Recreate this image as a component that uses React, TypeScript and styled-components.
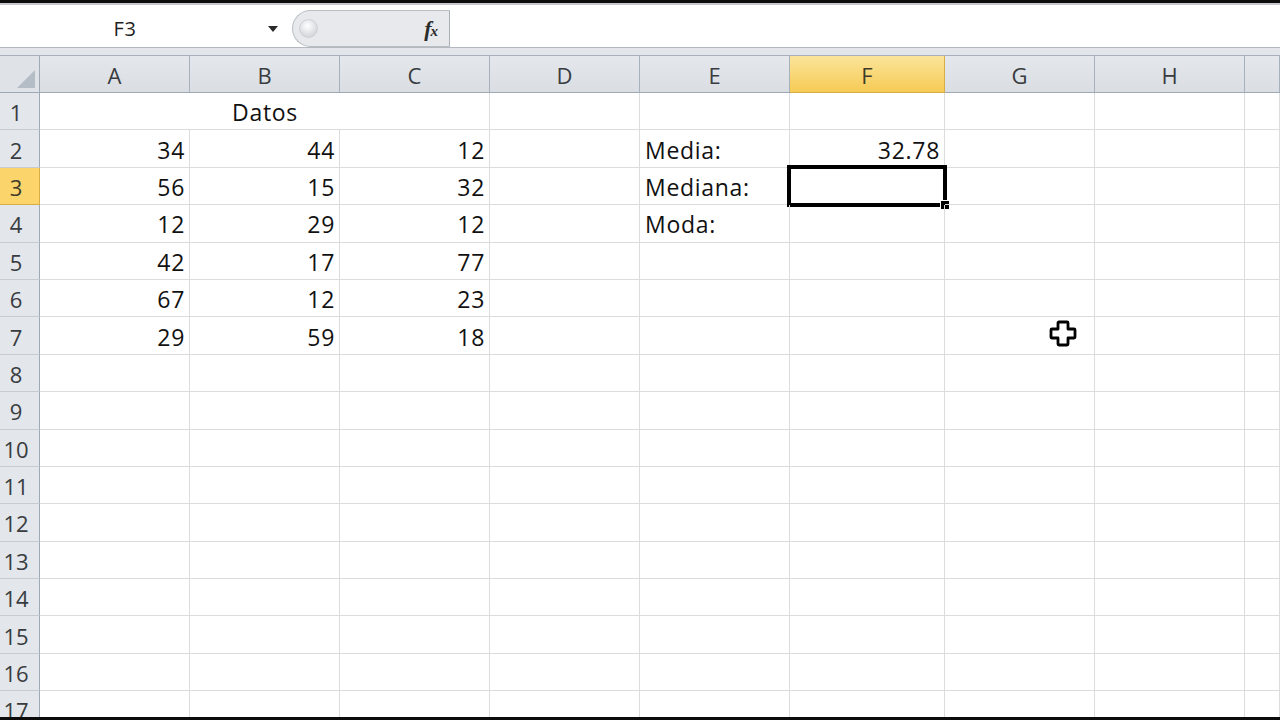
import styled, { createGlobalStyle } from "styled-components";

const GlobalStyle = createGlobalStyle`
  html, body {
    margin: 0;
    padding: 0;
    background: #000;
    overflow: hidden;
  }
  body {
    font-family: "Open Sans", "Noto Sans", sans-serif;
  }
`;

const colWidths = [40, 150, 150, 150, 150, 150, 155, 150, 150];
const colNames = ["A", "B", "C", "D", "E", "F", "G", "H", ""];
const activeCol = "F";
const activeRow = 3;

type Align = "left" | "right" | "center";
interface CellData {
  text: string;
  align: Align;
}

const cells: Record<string, CellData> = {
  A2: { text: "34", align: "right" },
  B2: { text: "44", align: "right" },
  C2: { text: "12", align: "right" },
  A3: { text: "56", align: "right" },
  B3: { text: "15", align: "right" },
  C3: { text: "32", align: "right" },
  A4: { text: "12", align: "right" },
  B4: { text: "29", align: "right" },
  C4: { text: "12", align: "right" },
  A5: { text: "42", align: "right" },
  B5: { text: "17", align: "right" },
  C5: { text: "77", align: "right" },
  A6: { text: "67", align: "right" },
  B6: { text: "12", align: "right" },
  C6: { text: "23", align: "right" },
  A7: { text: "29", align: "right" },
  B7: { text: "59", align: "right" },
  C7: { text: "18", align: "right" },
  E2: { text: "Media:", align: "left" },
  F2: { text: "32.78", align: "right" },
  E3: { text: "Mediana:", align: "left" },
  E4: { text: "Moda:", align: "left" },
};

const Screen = styled.div`
  width: 1280px;
  height: 720px;
  display: flex;
  flex-direction: column;
  background: #fff;
  overflow: hidden;
`;

const Letterbox = styled.div`
  height: 3px;
  flex: none;
  background: #0c0c0c;
`;

const FormulaBar = styled.div`
  height: 37px;
  flex: none;
  display: flex;
  align-items: stretch;
  padding-top: 5px;
  background: #fff;
  border-top: 2px solid #c6c8cb;
  border-bottom: 1px solid #b4b9bf;
`;

const NameBox = styled.div`
  width: 292px;
  display: flex;
  align-items: center;
`;

const NameText = styled.div`
  width: 250px;
  text-align: center;
  font-size: 20px;
  letter-spacing: 0.6px;
  color: #1e1e1e;
`;

const DropArrow = styled.div`
  margin-left: 18px;
  width: 0;
  height: 0;
  border-left: 5px solid transparent;
  border-right: 5px solid transparent;
  border-top: 6px solid #2a2a2a;
`;

const FxBox = styled.div`
  width: 158px;
  box-sizing: border-box;
  display: flex;
  align-items: center;
  justify-content: space-between;
  padding: 0 12px 0 6px;
  background: #e7e9ec;
  border: 1px solid #b9bec5;
  border-right: 1px solid #a9afb7;
  border-radius: 20px 0 0 20px;
`;

const Knob = styled.div`
  width: 17px;
  height: 17px;
  border-radius: 50%;
  background: radial-gradient(circle at 45% 35%, #ffffff 0%, #e4e6e9 45%, #c4c8cd 100%);
  border: 1px solid #cdd1d6;
`;

const Fx = styled.div`
  font-family: "Liberation Serif", serif;
  font-style: italic;
  font-weight: bold;
  font-size: 22px;
  color: #2b2b2b;
  letter-spacing: -1px;

  span {
    font-size: 15px;
  }
`;

const FormulaInput = styled.div`
  flex: 1;
  background: #fff;
`;

const Band = styled.div`
  height: 7px;
  flex: none;
  background: #e2e5e9;
  border-bottom: 1px solid #a7b0ba;
`;

const Sheet = styled.div`
  position: relative;
  flex: 1;
  overflow: hidden;
  background: #fff;
`;

const Grid = styled.div`
  display: grid;
  grid-template-columns: ${colWidths.map((w) => `${w}px`).join(" ")} 1fr;
  grid-template-rows: 37px repeat(17, 37.4px);
`;

const Corner = styled.div`
  position: relative;
  background: #dfe3e8;
  border-right: 1px solid #9ea9b5;
  border-bottom: 1px solid #9ea9b5;
  box-sizing: border-box;

  &::after {
    content: "";
    position: absolute;
    right: 4px;
    bottom: 4px;
    width: 0;
    height: 0;
    border-left: 18px solid transparent;
    border-bottom: 18px solid #b4bcc5;
  }
`;

const ColHead = styled.div<{ $active?: boolean }>`
  box-sizing: border-box;
  display: flex;
  align-items: center;
  justify-content: center;
  padding-top: 1px;
  font-size: 22px;
  color: ${(p) => (p.$active ? "#3d3a2a" : "#383c40")};
  background: ${(p) =>
    p.$active ? "linear-gradient(#fbe49a, #f6cb55)" : "linear-gradient(#e4e7eb, #dadee3)"};
  border-right: 1px solid ${(p) => (p.$active ? "#d9ad45" : "#a7b1bc")};
  border-bottom: 1px solid ${(p) => (p.$active ? "#d9ad45" : "#9ea9b5")};
`;

const RowHead = styled.div<{ $active?: boolean }>`
  box-sizing: border-box;
  display: flex;
  align-items: center;
  justify-content: center;
  padding: 2px 7px 0 0;
  font-size: 22px;
  color: ${(p) => (p.$active ? "#3d3a2a" : "#383c40")};
  background: ${(p) => (p.$active ? "#fbd56c" : "#e3e6ea")};
  border-right: 1px solid ${(p) => (p.$active ? "#d9ad45" : "#9ea9b5")};
  border-bottom: 1px solid ${(p) => (p.$active ? "#d9ad45" : "#c6ccd3")};
`;

const Cell = styled.div<{ $align?: Align; $span?: number }>`
  position: relative;
  box-sizing: border-box;
  display: flex;
  align-items: center;
  justify-content: ${(p) =>
    p.$align === "right" ? "flex-end" : p.$align === "center" ? "center" : "flex-start"};
  grid-column: span ${(p) => p.$span ?? 1};
  padding: 2px 4px 0 5px;
  font-size: 23px;
  letter-spacing: 0.7px;
  color: #111;
  white-space: nowrap;
  border-right: 1px solid #dadcdd;
  border-bottom: 1px solid #dadcdd;
`;

const Selection = styled.div`
  position: absolute;
  top: -3px;
  left: -3px;
  right: -3px;
  bottom: -3px;
  border: 4px solid #000;
  pointer-events: none;
`;

const FillHandle = styled.div`
  position: absolute;
  right: -7px;
  bottom: -7px;
  width: 8px;
  height: 8px;
  background: #000;
  border: 1px solid #fff;
`;

const Cursor = styled.svg`
  position: absolute;
  left: 1049px;
  top: 263px;
`;

function SheetRow({ row }: { row: number }) {
  const isActiveRow = row === activeRow;
  return (
    <>
      <RowHead $active={isActiveRow}>{row}</RowHead>
      {row === 1 ? (
        <>
          <Cell $align="center" $span={3}>
            Datos
          </Cell>
          {colNames.slice(3).map((c, i) => (
            <Cell key={i} />
          ))}
        </>
      ) : (
        colNames.map((c, i) => {
          const data = c ? cells[`${c}${row}`] : undefined;
          const selected = c === activeCol && isActiveRow;
          return (
            <Cell key={i} $align={data?.align}>
              {data?.text}
              {selected && (
                <Selection>
                  <FillHandle />
                </Selection>
              )}
            </Cell>
          );
        })
      )}
    </>
  );
}

export default function App() {
  const rows = Array.from({ length: 17 }, (_, i) => i + 1);
  return (
    <>
      <GlobalStyle />
      <Screen>
        <Letterbox />
        <FormulaBar>
          <NameBox>
            <NameText>F3</NameText>
            <DropArrow />
          </NameBox>
          <FxBox>
            <Knob />
            <Fx>
              f<span>x</span>
            </Fx>
          </FxBox>
          <FormulaInput />
        </FormulaBar>
        <Band />
        <Sheet>
          <Grid>
            <Corner />
            {colNames.map((c, i) => (
              <ColHead key={i} $active={c === activeCol}>
                {c}
              </ColHead>
            ))}
            {rows.map((r) => (
              <SheetRow key={r} row={r} />
            ))}
          </Grid>
          <Cursor width="30" height="30" viewBox="0 0 30 30">
            <path
              d="M10 3 H18 Q19 3 19 4 V10 H25 Q26 10 26 11 V18 Q26 19 25 19 H19 V25 Q19 26 18 26 H10 Q9 26 9 25 V19 H3 Q2 19 2 18 V11 Q2 10 3 10 H9 V4 Q9 3 10 3 Z"
              fill="#fff"
              stroke="#000"
              strokeWidth="2.8"
              strokeLinejoin="round"
            />
          </Cursor>
        </Sheet>
        <Letterbox />
      </Screen>
    </>
  );
}
